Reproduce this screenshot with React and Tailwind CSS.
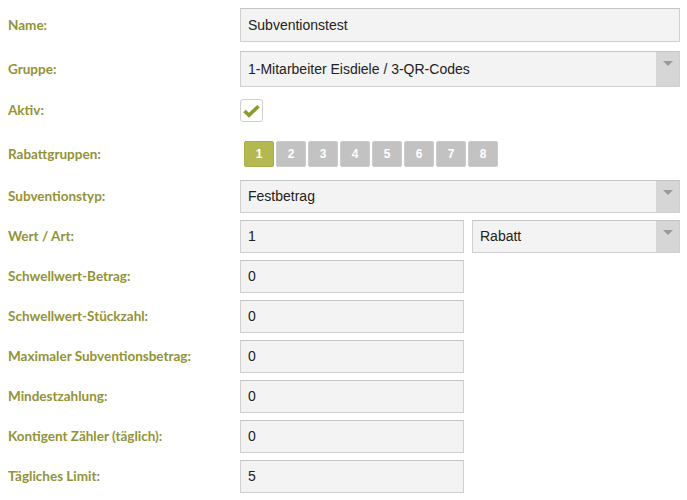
const labelCls = "w-[240px] shrink-0 pl-2 text-[13.5px] font-bold text-[#929336] [font-family:Lato,'Open_Sans',sans-serif]";
const boxCls = "border border-[#cfcfcf] border-t-[#c4c4c4] bg-[#f3f3f3] pl-[7px] flex items-center text-[14px] text-[#222] [font-family:'Liberation_Sans',Arial,sans-serif]";

function TextBox({ value, className }) {
  return <div className={`${boxCls} ${className}`}>{value}</div>;
}

function SelectBox({ value, className }) {
  return (
    <div className={`${boxCls} pr-0 ${className}`}>
      <span className="flex-1">{value}</span>
      <div className="w-[23px] self-stretch bg-[#d6d6d6] flex justify-center pt-[9px]">
        <div className="w-0 h-0 border-l-[5px] border-r-[5px] border-t-[5px] border-l-transparent border-r-transparent border-t-[#999]" />
      </div>
    </div>
  );
}

function Row({ label, children, className = "" }) {
  return (
    <div className={`flex items-center ${className}`}>
      <div className={labelCls}>{label}</div>
      {children}
    </div>
  );
}

const smallRows = [
  ["Schwellwert-Betrag:", "0"],
  ["Schwellwert-Stückzahl:", "0"],
  ["Maximaler Subventionsbetrag:", "0"],
  ["Mindestzahlung:", "0"],
  ["Kontigent Zähler (täglich):", "0"],
  ["Tägliches Limit:", "5"],
];

export default function App() {
  return (
    <div className="w-[687px] h-[500px] bg-white overflow-hidden pt-2 pr-[7px]">
      <Row label="Name:">
        <TextBox value="Subventionstest" className="flex-1 h-[34px]" />
      </Row>
      <Row label="Gruppe:" className="mt-[9px]">
        <SelectBox value="1-Mitarbeiter Eisdiele / 3-QR-Codes" className="flex-1 h-[36px]" />
      </Row>
      <Row label="Aktiv:" className="mt-[12px]">
        <div className="w-[23px] h-[23px] rounded-[3px] border border-[#cfcfcf] bg-white flex items-center justify-center">
          <svg width="17" height="14" viewBox="0 0 17 14">
            <path d="M1.5 7 L6 11.2 L15.5 2.2" fill="none" stroke="#8e9a2c" strokeWidth="3.6" strokeLinejoin="miter" />
          </svg>
        </div>
      </Row>
      <Row label="Rabattgruppen:" className="mt-[19px]">
        <div className="flex gap-[2px] pl-1">
          {[1, 2, 3, 4, 5, 6, 7, 8].map((n) => (
            <div
              key={n}
              className={`w-[30px] h-[26px] rounded-[2px] border flex items-center justify-center text-[12px] font-bold text-white [font-family:'Liberation_Sans',Arial,sans-serif] ${
                n === 1 ? "bg-[#b3b851] border-[#a9ae48]" : "bg-[#c2c2c2] border-[#cbcbcb]"
              }`}
            >
              {n}
            </div>
          ))}
        </div>
      </Row>
      <Row label="Subventionstyp:" className="mt-[13px]">
        <SelectBox value="Festbetrag" className="flex-1 h-[33px]" />
      </Row>
      <Row label="Wert / Art:" className="mt-[7px]">
        <div className="flex-1 flex gap-[8px]">
          <TextBox value="1" className="w-[224px] h-[33px]" />
          <SelectBox value="Rabatt" className="flex-1 h-[33px]" />
        </div>
      </Row>
      {smallRows.map(([label, v]) => (
        <Row key={label} label={label} className="mt-[7px]">
          <TextBox value={v} className="w-[224px] h-[33px]" />
        </Row>
      ))}
    </div>
  );
}
